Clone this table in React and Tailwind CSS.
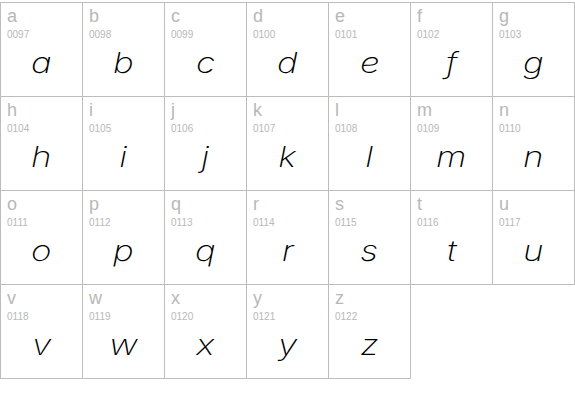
const chars = 'abcdefghijklmnopqrstuvwxyz'.split('');

function Cell({ ch, index }) {
  const col = index % 7;
  const row = Math.floor(index / 7);
  const code = String(ch.charCodeAt(0)).padStart(4, '0');
  return (
    <div
      className={
        'flex flex-col border-r border-b border-[#bdbdbd] ' +
        (col === 0 ? 'border-l ' : '') +
        (row === 0 ? 'border-t h-[95px] ' : 'h-[94px] ')
      }
    >
      <div className="pl-[6px] pt-[4px] font-['Liberation_Sans',sans-serif] text-[#b8b8b8] leading-none">
        <div className="text-[18px] h-[17px]">{ch}</div>
        <div className="text-[10px] mt-[6px]">{code}</div>
      </div>
      <div className="mt-[9px] text-center font-['Inter',sans-serif] font-extralight italic text-[28px] text-black leading-none">
        <span className="inline-block scale-x-125">{ch}</span>
      </div>
    </div>
  );
}

export default function App() {
  return (
    <div className="w-[575px] h-[414px] bg-white pt-[2px]">
      <div className="grid grid-cols-[83px_repeat(6,82px)]">
        {chars.map((ch, i) => (
          <Cell key={ch} ch={ch} index={i} />
        ))}
      </div>
    </div>
  );
}
